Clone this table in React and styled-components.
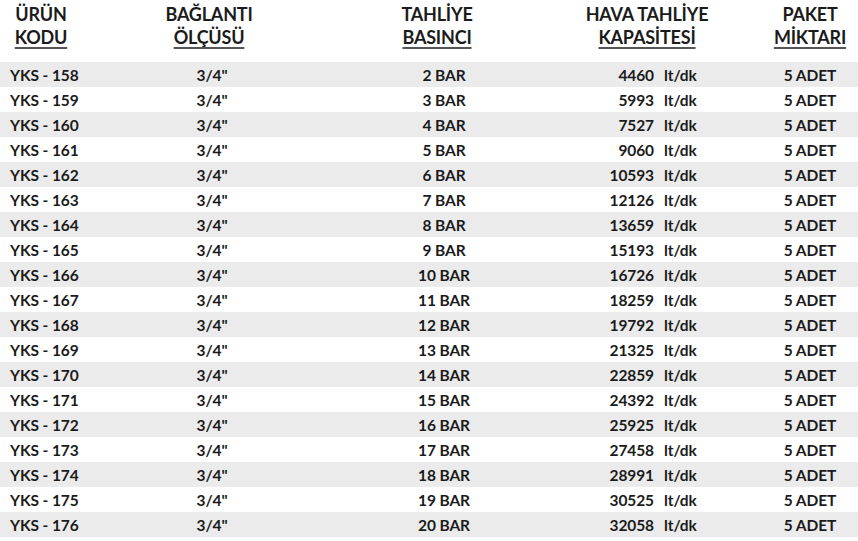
import React from "react";
import styled, { createGlobalStyle } from "styled-components";

const Global = createGlobalStyle`
  html, body { margin: 0; padding: 0; background: #fff; }
  body { font-family: Lato, "Open Sans", "Liberation Sans", sans-serif; color: #1b1b1b; }
`;

const COLS = "82px 260px 204px 202px 110px";

const Table = styled.div`
  width: 858px;
  display: flex;
  flex-direction: column;
`;

const HeadRow = styled.div`
  display: grid;
  grid-template-columns: ${COLS};
  height: 62px;
  box-sizing: border-box;
  padding-top: 3px;
`;

const HeadCell = styled.div`
  display: flex;
  flex-direction: column;
  align-items: center;
  font-size: 18px;
  font-weight: 700;
  line-height: 23px;
  letter-spacing: -0.2px;
  padding-left: ${(p) => p.$pl || 0}px;
  padding-right: ${(p) => p.$pr || 0}px;
`;

const Under = styled.span`
  text-decoration: underline;
  text-decoration-thickness: 2px;
  text-decoration-color: #555;
  text-underline-offset: 3px;
`;

const Row = styled.div`
  display: grid;
  grid-template-columns: ${COLS};
  height: 25px;
  align-items: center;
  background: ${(p) => (p.$shade ? "#ebebeb" : "#ffffff")};
  font-size: 15.5px;
  font-weight: 700;
  letter-spacing: -0.1px;
`;

const Cell = styled.div`
  text-align: ${(p) => p.$align || "center"};
  padding-left: ${(p) => p.$pl || 0}px;
  padding-right: ${(p) => p.$pr || 0}px;
  white-space: nowrap;
`;

const Capacity = styled.div`
  display: grid;
  grid-template-columns: 108px auto;
  column-gap: 10px;
  white-space: nowrap;
`;

const Num = styled.span`
  text-align: right;
`;

const rows = Array.from({ length: 19 }, (_, i) => ({
  code: `YKS - ${158 + i}`,
  bar: `${2 + i} BAR`,
  cap: [4460, 5993, 7527, 9060, 10593, 12126, 13659, 15193, 16726, 18259, 19792, 21325, 22859, 24392, 25925, 27458, 28991, 30525, 32058][i],
}));

export default function App() {
  return (
    <>
      <Global />
      <Table>
        <HeadRow>
          <HeadCell>
            <span>ÜRÜN</span>
            <Under>KODU</Under>
          </HeadCell>
          <HeadCell $pr={6}>
            <span>BAĞLANTI</span>
            <Under>ÖLÇÜSÜ</Under>
          </HeadCell>
          <HeadCell $pr={14}>
            <span>TAHLİYE</span>
            <Under>BASINCI</Under>
          </HeadCell>
          <HeadCell>
            <span>HAVA TAHLİYE</span>
            <Under>KAPASİTESİ</Under>
          </HeadCell>
          <HeadCell $pl={14}>
            <span>PAKET</span>
            <Under>MİKTARI</Under>
          </HeadCell>
        </HeadRow>
        {rows.map((r, i) => (
          <Row key={r.code} $shade={i % 2 === 0}>
            <Cell $align="left" $pl={10}>{r.code}</Cell>
            <Cell>3/4"</Cell>
            <Cell>{r.bar}</Cell>
            <Capacity>
              <Num>{r.cap}</Num>
              <span>lt/dk</span>
            </Capacity>
            <Cell $pl={14}>5 ADET</Cell>
          </Row>
        ))}
      </Table>
    </>
  );
}
